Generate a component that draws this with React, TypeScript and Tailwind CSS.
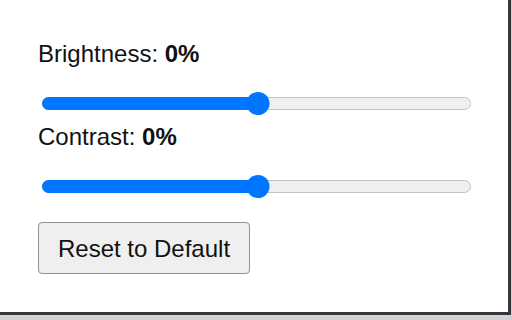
import { useState } from "react";

type SliderProps = {
  value: number;
};

function Slider({ value }: SliderProps) {
  return (
    <div className="relative ml-[4px] flex h-[23px] w-[429px] items-center">
      <div className="relative h-[13px] w-full rounded-full border border-[#c2c2c2] bg-[#efefef]">
        <div
          className="absolute left-[-1px] top-[-1px] h-[13px] rounded-full bg-[#0075ff]"
          style={{ width: `${value}%` }}
        />
      </div>
      <div
        className="absolute top-0 h-[23px] w-[23px] -translate-x-1/2 rounded-full bg-[#0075ff]"
        style={{ left: `${value}%` }}
      />
    </div>
  );
}

export default function App() {
  const [brightness] = useState(0);
  const [contrast] = useState(0);

  return (
    <div className="h-[320px] w-[512px] bg-[#d2d2d2] font-['Liberation_Sans',Arial,sans-serif] text-[#111]">
      <div className="h-[315px] w-[511px] border-b-[3px] border-r-[3px] border-[#33363b] bg-white pl-[38px] pt-[40px]">
        <p className="text-[24px] leading-[27px]">
          Brightness: <b>{brightness}%</b>
        </p>
        <div className="mt-[25px]">
          <Slider value={50.3} />
        </div>
        <p className="mt-[8px] text-[24px] leading-[27px]">
          Contrast: <b>{contrast}%</b>
        </p>
        <div className="mt-[25px]">
          <Slider value={50.3} />
        </div>
        <button className="mt-[24px] flex h-[52px] w-[212px] items-center justify-center rounded-[4px] border-[1.5px] border-[#8f8f8f] bg-[#efefef] text-[24px] leading-[27px] text-[#111]">
          Reset to Default
        </button>
      </div>
    </div>
  );
}
